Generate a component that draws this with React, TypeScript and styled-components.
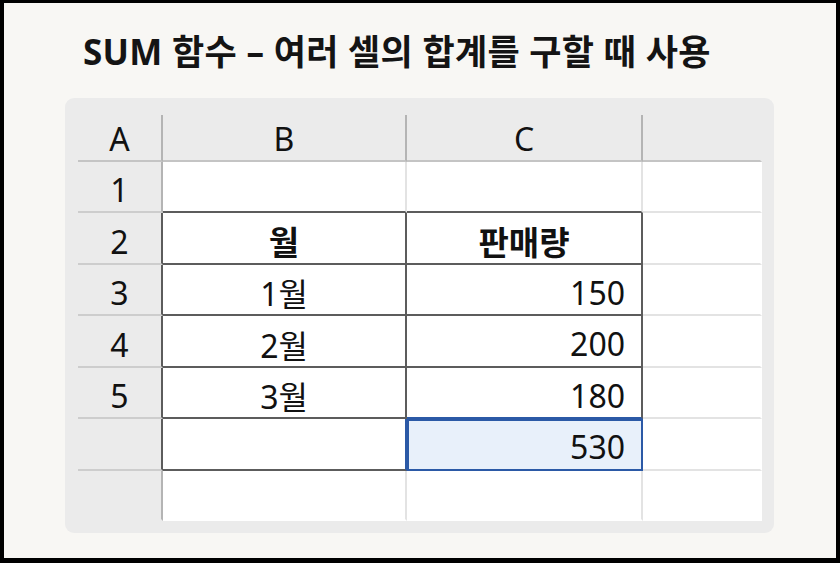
import React from "react";
import styled, { createGlobalStyle } from "styled-components";

type Line = "none" | "light" | "dark" | "sel" | "head";

const LINE: Record<Line, string> = {
  none: "transparent",
  light: "#e3e3e3",
  dark: "#5c5c5c",
  sel: "#2b59a6",
  head: "#b4b4b4",
};

interface CellData {
  text?: string;
  bold?: boolean;
  align: "center" | "right";
  right: Line;
  bottom: Line;
  selected?: boolean;
}

interface RowData {
  label: string;
  edge: Line;
  last?: boolean;
  cells: CellData[];
}

const box = (right: Line, bottom: Line) => ({ right, bottom });

const rows: RowData[] = [
  {
    label: "1",
    edge: "head",
    cells: [
      { align: "center", ...box("light", "dark") },
      { align: "right", ...box("light", "dark") },
      { align: "right", ...box("none", "light") },
    ],
  },
  {
    label: "2",
    edge: "dark",
    cells: [
      { text: "월", bold: true, align: "center", ...box("dark", "dark") },
      { text: "판매량", bold: true, align: "center", ...box("dark", "dark") },
      { align: "right", ...box("none", "light") },
    ],
  },
  {
    label: "3",
    edge: "dark",
    cells: [
      { text: "1월", align: "center", ...box("dark", "dark") },
      { text: "150", align: "right", ...box("dark", "dark") },
      { align: "right", ...box("none", "light") },
    ],
  },
  {
    label: "4",
    edge: "dark",
    cells: [
      { text: "2월", align: "center", ...box("dark", "dark") },
      { text: "200", align: "right", ...box("dark", "dark") },
      { align: "right", ...box("none", "light") },
    ],
  },
  {
    label: "5",
    edge: "dark",
    cells: [
      { text: "3월", align: "center", ...box("dark", "dark") },
      { text: "180", align: "right", ...box("dark", "sel") },
      { align: "right", ...box("none", "light") },
    ],
  },
  {
    label: "",
    edge: "dark",
    cells: [
      { align: "center", ...box("sel", "dark") },
      { text: "530", align: "right", selected: true, ...box("sel", "sel") },
      { align: "right", ...box("none", "light") },
    ],
  },
  {
    label: "",
    edge: "head",
    last: true,
    cells: [
      { align: "center", ...box("light", "none") },
      { align: "right", ...box("light", "none") },
      { align: "right", ...box("none", "none") },
    ],
  },
];

const columns = ["A", "B", "C", ""];

const App: React.FC = () => {
  return (
    <>
      <GlobalStyle />
      <Frame>
        <Title>SUM 함수 – 여러 셀의 합계를 구할 때 사용</Title>
        <Panel>
          <Sheet>
            {columns.map((c, i) => (
              <ColHead key={"h" + i} $last={i === columns.length - 1}>
                {c}
              </ColHead>
            ))}
            {rows.map((r, ri) => (
              <React.Fragment key={ri}>
                <RowHead $edge={r.edge} $last={r.last}>
                  {r.label}
                </RowHead>
                {r.cells.map((cell, ci) => (
                  <Cell
                    key={ci}
                    $align={cell.align}
                    $bold={cell.bold}
                    $right={cell.right}
                    $bottom={cell.bottom}
                    $selected={cell.selected}
                  >
                    {cell.text}
                  </Cell>
                ))}
              </React.Fragment>
            ))}
          </Sheet>
        </Panel>
      </Frame>
    </>
  );
};

export default App;

const GlobalStyle = createGlobalStyle`
  * {
    box-sizing: border-box;
  }
  html, body {
    margin: 0;
    padding: 0;
    background: #000;
  }
`;

const Frame = styled.div`
  width: 840px;
  height: 563px;
  border-style: solid;
  border-color: #000;
  border-width: 3px 4px 5px 4px;
  background: #f8f7f4;
  padding: 28px 0 0 61px;
  font-family: "Noto Sans", "Noto Sans CJK KR", sans-serif;
  color: #111;
  overflow: hidden;
`;

const Title = styled.h1`
  margin: 0;
  padding-left: 18px;
  height: 41px;
  font-size: 35px;
  line-height: 41px;
  font-weight: 700;
  letter-spacing: 0.3px;
  color: #141414;
  white-space: nowrap;
`;

const Panel = styled.div`
  margin-top: 26px;
  width: 709px;
  height: 435px;
  background: #ebebeb;
  border-radius: 9px;
  padding: 17px 12px 12px 13px;
`;

const Sheet = styled.div`
  display: grid;
  grid-template-columns: 85px 244px 236px 119px;
  grid-template-rows: 47px 51px 52px 51px 52px 51px 52px 50px;
`;

const ColHead = styled.div<{ $last?: boolean }>`
  display: flex;
  align-items: center;
  justify-content: center;
  font-size: 32px;
  font-weight: 400;
  border-right: 2px solid ${(p) => (p.$last ? "transparent" : LINE.head)};
  border-bottom: 2px solid #c4c4c4;
  padding-top: 2px;
`;

const RowHead = styled.div<{ $edge: Line; $last?: boolean }>`
  display: flex;
  align-items: center;
  justify-content: center;
  font-size: 32px;
  padding-top: 6px;
  border-right: 2px solid ${(p) => LINE[p.$edge]};
  border-bottom: 2px solid ${(p) => (p.$last ? "transparent" : "#cdcdcd")};
`;

const Cell = styled.div<{
  $align: "center" | "right";
  $bold?: boolean;
  $right: Line;
  $bottom: Line;
  $selected?: boolean;
}>`
  display: flex;
  align-items: center;
  justify-content: ${(p) => (p.$align === "right" ? "flex-end" : "center")};
  padding: 5px ${(p) => (p.$align === "right" ? "16px" : "0")} 0 0;
  background: ${(p) => (p.$selected ? "#e8f0fa" : "#fff")};
  font-size: ${(p) => (p.$bold ? "33px" : "32px")};
  font-weight: ${(p) => (p.$bold ? 700 : 400)};
  border-right: 2px solid ${(p) => LINE[p.$right]};
  border-bottom: 2px solid ${(p) => LINE[p.$bottom]};
  ${(p) =>
    p.$selected &&
    `
    box-shadow: inset 2px 2px 0 ${LINE.sel};
  `}
`;
